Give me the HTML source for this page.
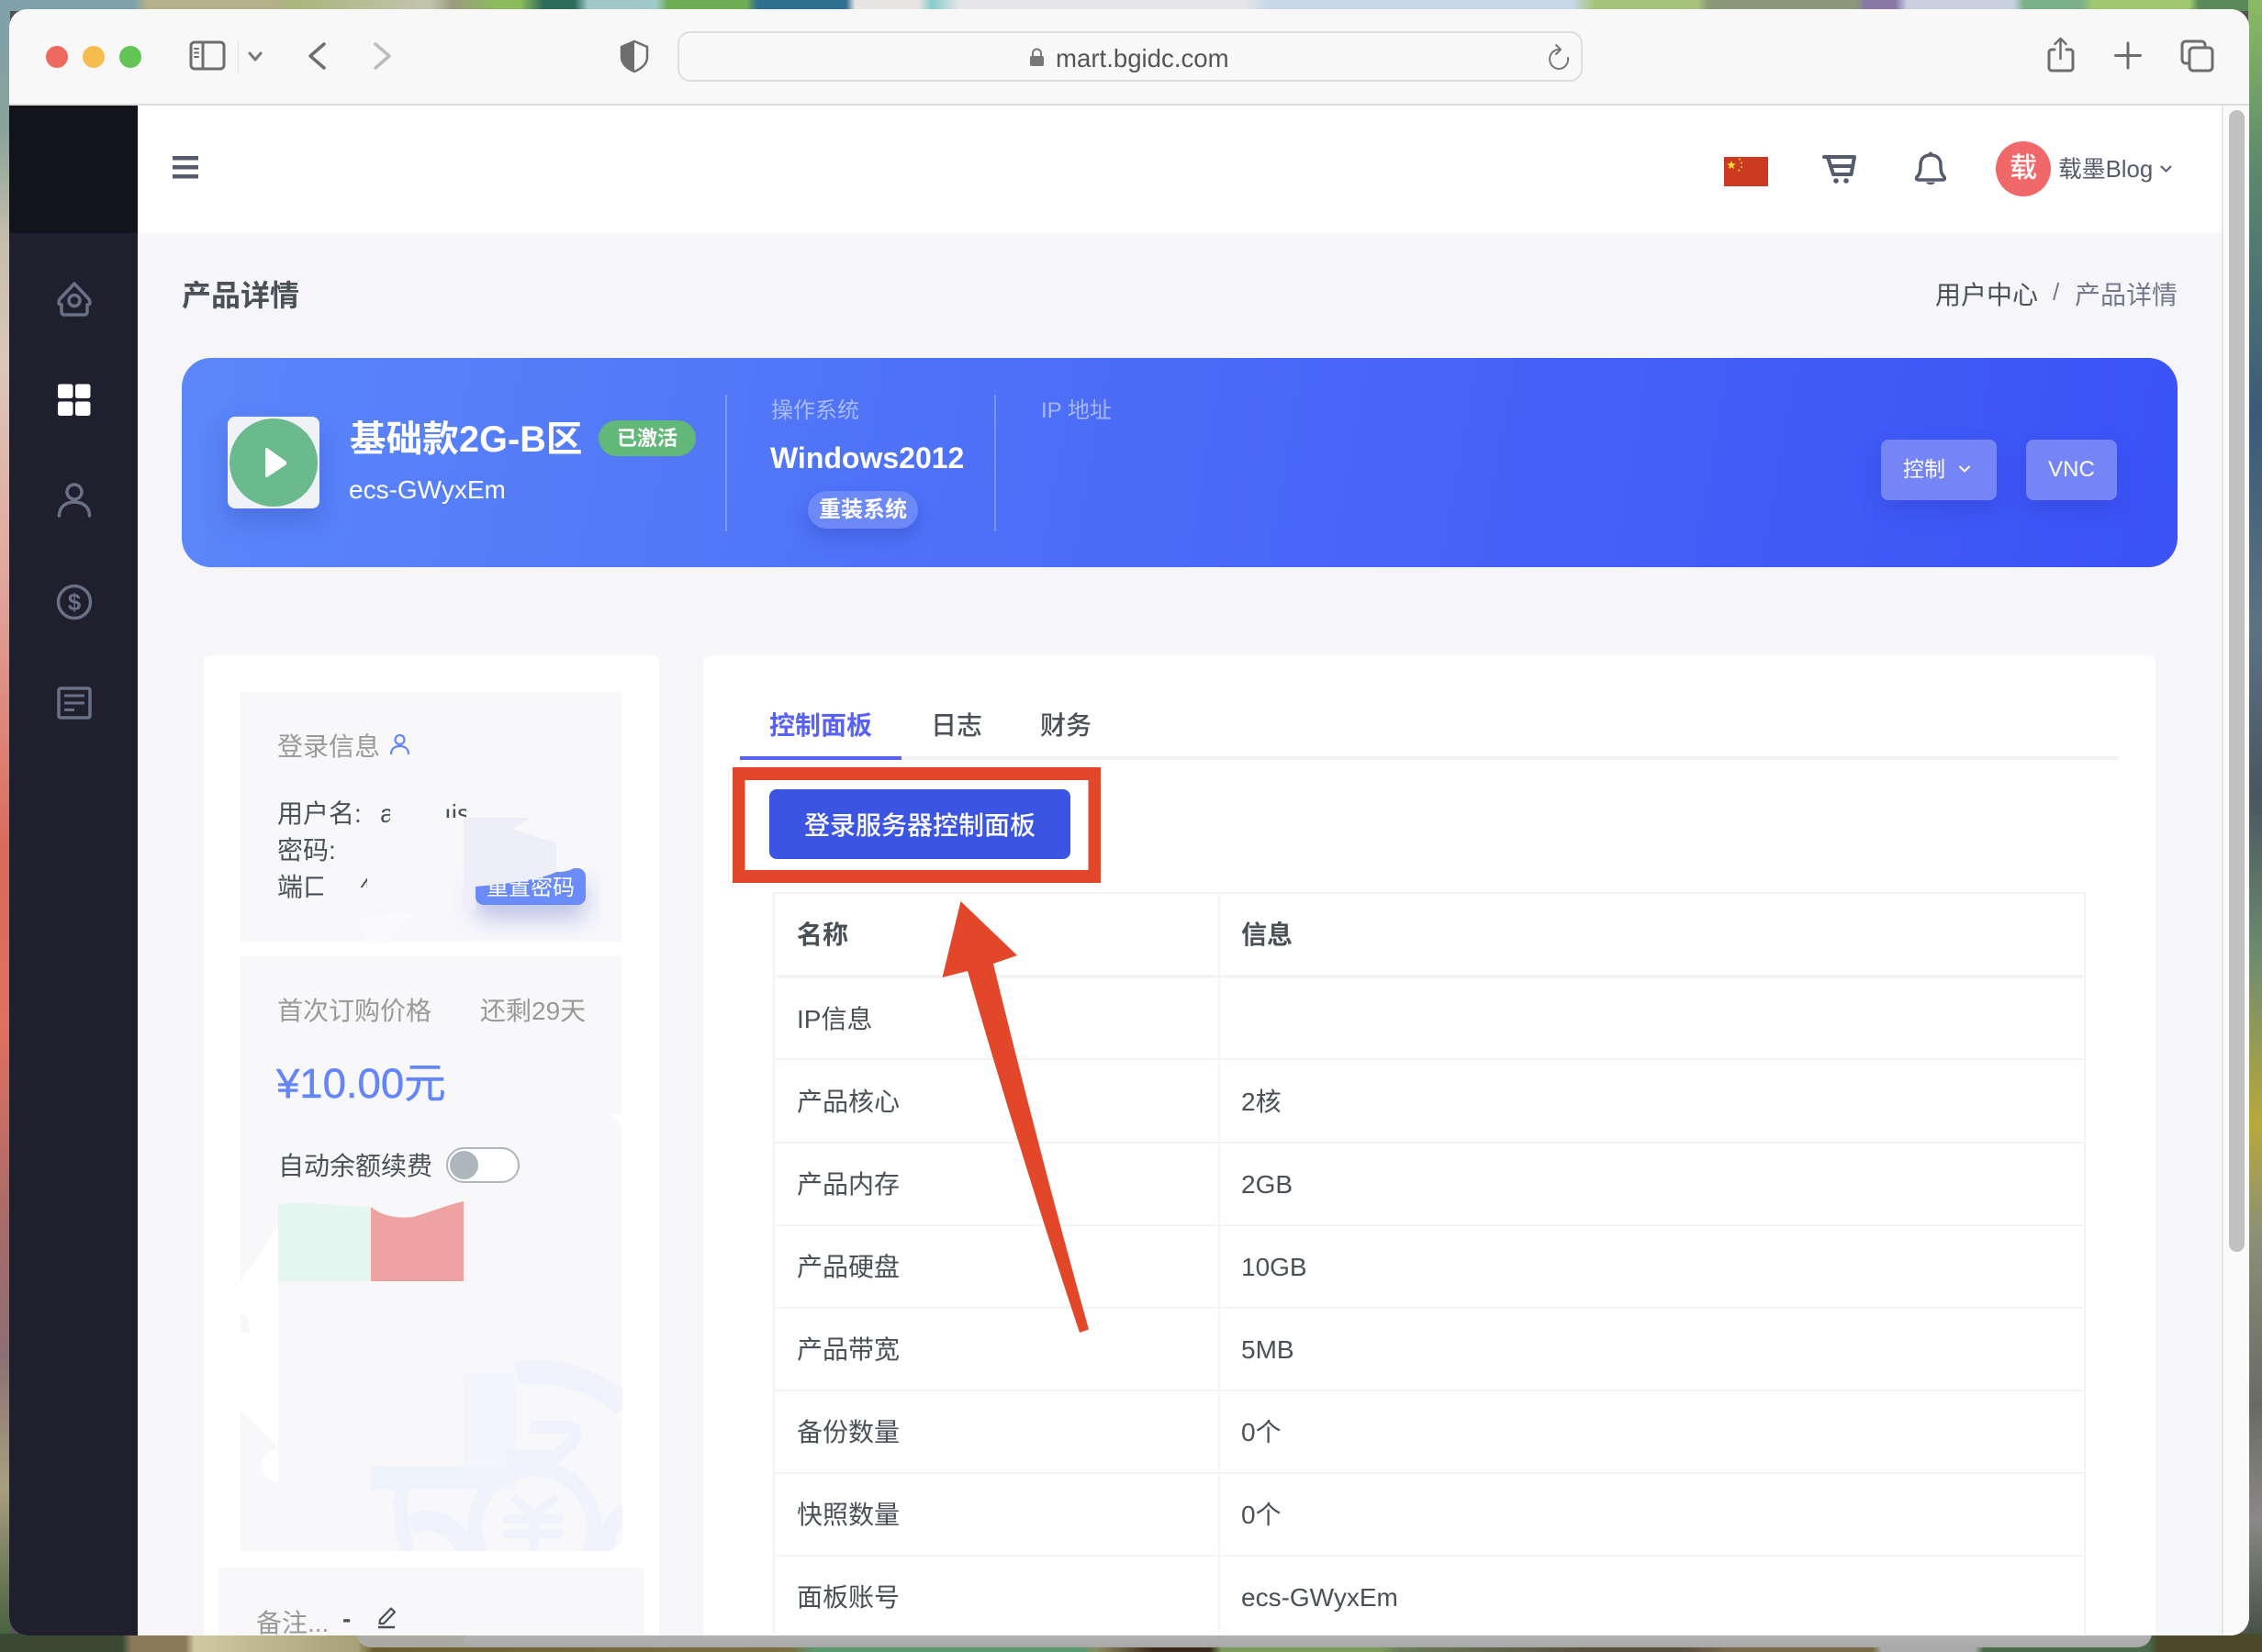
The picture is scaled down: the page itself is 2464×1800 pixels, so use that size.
<!DOCTYPE html>
<html lang="zh"><head><meta charset="utf-8"><title>产品详情</title>
<style>
html,body{margin:0;padding:0;width:2464px;height:1800px;overflow:hidden;background:#555}
body{font-family:"Liberation Sans","Noto Sans CJK SC",sans-serif;position:relative}
.a{position:absolute}
.t{position:absolute;white-space:nowrap;line-height:40px;height:40px}
#win{position:absolute;left:0;top:0;width:2464px;height:1800px;clip-path:inset(10px 14px 18px 10px round 20px);background:#f6f6fa}
.c{color:#495057;font-size:28px}
.g{color:#999;font-size:28px}
.h{background:#f4f4f7}
svg{position:absolute;left:0;top:0}
</style></head><body>
<!-- wallpaper -->
<div class="a" style="left:0;top:0;width:2464px;height:12px;background:linear-gradient(90deg,#7fa2aa 0,#7fa2aa 5.900%,#b3b08a 6.500%,#b3b08a 12%,#a8b67a 13%,#c4c4ae 19%,#9a9c80 20%,#8cbb5a 22%,#8cbb5a 23%,#2f6d5a 24%,#2f6d5a 25.400%,#a0c8c8 26%,#a0c8c8 29%,#6fae55 29.500%,#6fae55 33%,#2f6f90 33.500%,#2f6f90 37.400%,#e8e4e4 37.800%,#e8e4e4 40.600%,#8cc 41.200%,#e6e6e8 42.400%,#e6e6e8 55%,#c8d8e8 56%,#c8d8e8 69.500%,#a8c47a 70.500%,#a8c47a 75%,#8a9a78 75.500%,#8a9a78 82%,#8878a8 82.500%,#8878a8 83.800%,#c8d0e0 84.300%,#c8d0e0 89%,#7ab088 89.500%,#7ab088 92%,#a0c870 92.500%,#a0c870 96.800%,#5a8a5a 97.200%,#5a8a5a 100%)"></div>
<div class="a" style="left:0;top:0;width:11px;height:1800px;background:linear-gradient(180deg,#7fa2aa 0,#8aa39a 8%,#c2bcab 14%,#dcc6bb 22%,#e3a69c 35%,#d9695a 52%,#e0705f 62%,#a56a6a 75%,#8c6f74 82%,#a89f7e 90%,#3f5a3a 100%)"></div>
<div class="a" style="left:2449px;top:0;width:15px;height:1800px;background:linear-gradient(180deg,#8bbb62 0,#5d8a6c 10%,#3a5a78 25%,#5d7380 38%,#4a5660 48%,#6f8c6e 58%,#b8a83c 68%,#8a8f78 75%,#6a6a64 85%,#8a8888 92%,#3b4a3c 100%)"></div>
<div class="a" style="left:0;top:1780px;width:2464px;height:20px;background:linear-gradient(90deg,#3a4a32 0,#3a4a32 5.400%,#8a7a5a 5.800%,#8a7a5a 8.200%,#d0c8a0 8.600%,#a8a078 15.800%,#6a6030 16.500%,#7a7040 35%,#5a9a70 36%,#5a9a70 47.800%,#8a8a60 48.500%,#3a2a1a 51%,#3a2a1a 53.500%,#7a9a5a 54%,#7a9a5a 61%,#6a7a58 62%,#5a5040 70%,#5a5040 74.500%,#7a6a4a 76.500%,#7a6a4a 82.800%,#aaa 83.200%,#aaa 87.300%,#4a6a4a 87.700%,#4a6a4a 95%,#4a4a2a 95.400%,#4a4a2a 100%)"></div>
<div class="a" style="left:388px;top:1776px;width:1956px;height:19px;border-radius:0 0 16px 16px;background:linear-gradient(180deg,#9c9c9c 0,#b2b2b2 40%,#a8a8a8 100%)"></div>
<div class="a" style="left:388px;top:1776px;width:118px;height:19px;border-radius:0 0 0 16px;background:#aba9a3"></div>

<div id="win">
  <!-- chrome -->
  <div class="a" style="left:0;top:0;width:2464px;height:113px;background:#f8f8f8;border-bottom:2px solid #dcdcdc"></div>
  <div class="a" style="left:738px;top:34px;width:982px;height:51px;border:2px solid #dedede;border-radius:14px;background:#f9f9f9"></div>
  <div class="t" style="left:1150px;top:44px;font-size:27.600px;color:#555">mart.bgidc.com</div>

  <!-- sidebar -->
  <div class="a" style="left:10px;top:115px;width:140px;height:139px;background:#13131c"></div>
  <div class="a" style="left:10px;top:254px;width:140px;height:1540px;background:#1f1f2e"></div>

  <!-- header -->
  <div class="a" style="left:150px;top:115px;width:2271px;height:139px;background:#fff"></div>
  <div class="a" style="left:2174px;top:154px;width:60px;height:60px;border-radius:50%;background:#f1686a;color:#fff;font-size:30px;line-height:60px;text-align:center;font-weight:500">载</div>
  <div class="t" style="left:2242px;top:165px;font-size:25.800px;color:#555b6d">载墨Blog</div>

  <!-- scroll track -->
  <div class="a" style="left:2420px;top:115px;width:2px;height:1680px;background:#e6e6e6"></div>
  <div class="a" style="left:2422px;top:115px;width:30px;height:1680px;background:#fafafa"></div>
  <div class="a" style="left:2428px;top:120px;width:17px;height:1244px;border-radius:9px;background:#c1c1c1"></div>

  <!-- title row -->
  <div class="t" style="left:198px;top:302px;font-size:32px;font-weight:700;color:#495057">产品详情</div>
  <div class="t" style="left:2108px;top:302px;font-size:28px;color:#495057">用户中心</div>
  <div class="t" style="left:2236px;top:298px;font-size:26px;color:#74788d">/</div>
  <div class="t" style="left:2260px;top:302px;font-size:28px;color:#74788d">产品详情</div>

  <!-- banner -->
  <div class="a" style="left:198px;top:390px;width:2174px;height:228px;border-radius:32px;background:linear-gradient(100deg,#5b87f9 0,#4a6af8 50%,#3a52f6 100%)"></div>
  <div class="a" style="left:248px;top:454px;width:100px;height:100px;border-radius:8px;background:#eff2f7;box-shadow:0 14px 28px rgba(40,60,170,.28)"></div>
  <div class="a" style="left:250px;top:456px;width:96px;height:96px;border-radius:50%;background:#6aba8e"></div>
  <div class="t" style="left:381px;top:459px;font-size:39.500px;font-weight:700;color:#fff;letter-spacing:.15px">基础款2G-B区</div>
  <div class="a" style="left:652px;top:458px;width:106px;height:39px;border-radius:20px;background:#62b879;color:#fff;font-size:22px;font-weight:700;line-height:39px;text-align:center">已激活</div>
  <div class="t" style="left:380px;top:514px;font-size:28px;color:#fff">ecs-GWyxEm</div>
  <div class="a" style="left:790px;top:430px;width:2px;height:149px;background:rgba(255,255,255,.25)"></div>
  <div class="a" style="left:1083px;top:430px;width:2px;height:149px;background:rgba(255,255,255,.25)"></div>
  <div class="t" style="left:840px;top:428px;font-size:24px;color:rgba(255,255,255,.5)">操作系统</div>
  <div class="t" style="left:1134px;top:428px;font-size:24px;color:rgba(255,255,255,.5)">IP 地址</div>
  <div class="t" style="left:839px;top:479px;font-size:32px;font-weight:700;color:#fff">Windows2012</div>
  <div class="a" style="left:880px;top:535px;width:120px;height:41px;border-radius:21px;background:#6d89f8;color:#fff;font-size:24px;font-weight:700;line-height:41px;text-align:center;box-shadow:0 10px 20px rgba(40,60,170,.3)">重装系统</div>
  <div class="a" style="left:2049px;top:479px;width:126px;height:66px;border-radius:8px;background:#7585f6;box-shadow:0 10px 22px rgba(40,50,170,.25)"></div>
  <div class="t" style="left:2073px;top:491px;font-size:23px;color:#fff">控制</div>
  <div class="a" style="left:2207px;top:479px;width:99px;height:66px;border-radius:8px;background:#7585f6;box-shadow:0 10px 22px rgba(40,50,170,.25);color:#fff;font-size:24px;line-height:66px;text-align:center">VNC</div>

  <!-- left card -->
  <div class="a" style="left:222px;top:714px;width:496px;height:1090px;border-radius:8px 8px 0 0;background:#fff"></div>
  <div class="a" style="left:262px;top:754px;width:416px;height:272px;background:#f8f8fb"></div>
  <div class="t g" style="left:302px;top:794px">登录信息</div>
  <div class="t c" style="left:302px;top:867px">用户名:</div>
  <div class="a c" style="left:414px;top:867px;width:11px;height:40px;overflow:hidden;line-height:40px">a</div>
  <div class="a c" style="left:484px;top:867px;width:24px;height:24px;overflow:hidden;line-height:40px">ıis</div>
  <div class="t c" style="left:302px;top:907px">密码:</div>
  <div class="a c" style="left:302px;top:947px;width:50px;height:40px;overflow:hidden;line-height:40px;white-space:nowrap">端口</div>
  <div class="a c" style="left:390px;top:947px;width:10px;height:20px;overflow:hidden;line-height:40px">4</div>
  <div class="a" style="left:518px;top:946px;width:120px;height:40px;border-radius:9px;background:#6a8bf8;color:#fff;font-size:24px;line-height:43px;text-align:center;box-shadow:0 14px 26px rgba(70,90,190,.35)">重置密码</div>

  <div class="a" style="left:262px;top:1042px;width:416px;height:648px;background:#f8f8fb;border-radius:0 0 18px 0"></div>
  <div class="t g" style="left:302px;top:1082px">首次订购价格</div>
  <div class="t g" style="left:523px;top:1082px">还剩29天</div>
  <div class="t" style="left:301px;top:1159px;font-size:45.500px;color:#6586f8;line-height:44px;height:44px;-webkit-text-stroke:.5px #6586f8">¥10.00元</div>
  <div class="t" style="left:303px;top:1251px;font-size:28px;color:#495057">自动余额续费</div>
  <div class="a" style="left:486px;top:1250px;width:76px;height:35px;border:2px solid #adb5bd;border-radius:20px;background:#fff"></div>
  <div class="a" style="left:490px;top:1254px;width:31px;height:31px;border-radius:50%;background:#adb5bd"></div>

  <div class="a" style="left:238px;top:1708px;width:464px;height:90px;background:#f8f8fb"></div>
  <div class="t g" style="left:279px;top:1749px">备注...</div>
  <div class="t c" style="left:373px;top:1744px;font-weight:700">-</div>

  <!-- right card -->
  <div class="a" style="left:766px;top:714px;width:1582px;height:1090px;border-radius:8px 8px 0 0;background:#fff"></div>
  <div class="t" style="left:838px;top:771px;font-size:28px;font-weight:700;color:#5a62f6">控制面板</div>
  <div class="t" style="left:1014px;top:771px;font-size:28px;font-weight:500;color:#495057">日志</div>
  <div class="t" style="left:1133px;top:771px;font-size:28px;font-weight:500;color:#495057">财务</div>
  <div class="a" style="left:806px;top:824px;width:1502px;height:4px;background:#f3f3f6"></div>
  <div class="a" style="left:806px;top:824px;width:176px;height:4px;background:#5a62f6"></div>
  <div class="a" style="left:838px;top:860px;width:328px;height:76px;border-radius:8px;background:#3b55e2;color:#fff;font-size:28px;line-height:80px;text-align:center;font-weight:500">登录服务器控制面板</div>

  <!-- table -->
  <div class="a h" style="left:843px;top:972px;width:1429px;height:2px"></div>
  <div class="a h" style="left:843px;top:1062px;width:1429px;height:4px"></div>
  <div class="a h" style="left:843px;top:1153px;width:1429px;height:2px"></div>
  <div class="a h" style="left:843px;top:1244px;width:1429px;height:2px"></div>
  <div class="a h" style="left:843px;top:1334px;width:1429px;height:2px"></div>
  <div class="a h" style="left:843px;top:1424px;width:1429px;height:2px"></div>
  <div class="a h" style="left:843px;top:1514px;width:1429px;height:2px"></div>
  <div class="a h" style="left:843px;top:1604px;width:1429px;height:2px"></div>
  <div class="a h" style="left:843px;top:1694px;width:1429px;height:2px"></div>
  <div class="a h" style="left:842px;top:972px;width:2px;height:820px"></div>
  <div class="a h" style="left:1327px;top:972px;width:2px;height:820px"></div>
  <div class="a h" style="left:2270px;top:972px;width:2px;height:820px"></div>
  <div class="t c" style="left:868px;top:999px;font-weight:700">名称</div>
  <div class="t c" style="left:1352px;top:999px;font-weight:700">信息</div>
  <div class="t c" style="left:868px;top:1091px">IP信息</div>
  <div class="t c" style="left:868px;top:1181px">产品核心</div><div class="t c" style="left:1352px;top:1181px">2核</div>
  <div class="t c" style="left:868px;top:1271px">产品内存</div><div class="t c" style="left:1352px;top:1271px">2GB</div>
  <div class="t c" style="left:868px;top:1361px">产品硬盘</div><div class="t c" style="left:1352px;top:1361px">10GB</div>
  <div class="t c" style="left:868px;top:1451px">产品带宽</div><div class="t c" style="left:1352px;top:1451px">5MB</div>
  <div class="t c" style="left:868px;top:1541px">备份数量</div><div class="t c" style="left:1352px;top:1541px">0个</div>
  <div class="t c" style="left:868px;top:1631px">快照数量</div><div class="t c" style="left:1352px;top:1631px">0个</div>
  <div class="t c" style="left:868px;top:1721px">面板账号</div><div class="t c" style="left:1352px;top:1721px">ecs-GWyxEm</div>

  <!-- overlay graphics -->
  <svg width="2464" height="1800" viewBox="0 0 2464 1800">
    <defs><clipPath id="wm"><path d="M262 1042H678V1672A18 18 0 0 1 660 1690H262Z"/></clipPath></defs>
    <!-- traffic lights -->
    <circle cx="62" cy="62" r="12" fill="#ee6a5f"/><circle cx="102" cy="62" r="12" fill="#f5bd4f"/><circle cx="142" cy="62" r="12" fill="#61c454"/>
    <!-- toolbar left -->
    <g fill="none" stroke="#6e6e6e" stroke-width="3" stroke-linecap="round" stroke-linejoin="round">
      <rect x="208" y="46" width="36" height="29" rx="4"/><path d="M221 46V75"/>
      <path d="M212 53h4M212 57.500h4M212 62h4" stroke-width="2"/>
      <path d="M259.500 45V80" stroke="#e4e4e4" stroke-width="1.500"/>
      <path d="M272 58l6 7 6-7" stroke="#777"/>
      <path d="M353 48L338 61 353 74" stroke-width="3.500"/>
      <path d="M409 48L424 61 409 74" stroke="#bcbcbc" stroke-width="3.500"/>
    </g>
    <path d="M691 45L705 51V62C705 70 698 75 691 78 684 75 677 70 677 62V51Z" fill="#f8f8f8" stroke="#6e6e6e" stroke-width="2.500" stroke-linejoin="round"/>
    <path d="M691 45V78C684 75 677 70 677 62V51Z" fill="#6e6e6e"/>
    <rect x="1122" y="61" width="15" height="11" rx="2" fill="#777"/><path d="M1125 61v-3a4.500 4.500 0 0 1 9 0v3" fill="none" stroke="#777" stroke-width="2"/>
    <g fill="none" stroke="#777" stroke-width="2" stroke-linecap="round" stroke-linejoin="round">
      <path d="M1699 54A10 10.500 0 1 0 1708 63"/><path d="M1695 49l5 5-5 5"/>
    </g>
    <g fill="none" stroke="#6e6e6e" stroke-width="3" stroke-linecap="round" stroke-linejoin="round">
      <path d="M2238 54H2235a3 3 0 0 0-3 3V74a3 3 0 0 0 3 3H2255a3 3 0 0 0 3-3V57a3 3 0 0 0-3-3H2251"/>
      <path d="M2244.500 64V42M2238.500 48l6-6 6 6" stroke-width="2.500"/>
      <path d="M2318 47V74M2304.500 60.500H2331.500"/>
      <path d="M2383 69H2381a4 4 0 0 1-4-4V49a4 4 0 0 1 4-4H2398a4 4 0 0 1 4 4v3"/>
      <rect x="2385" y="52" width="25" height="25" rx="4"/>
    </g>
    <!-- hamburger -->
    <g fill="#555b6d"><rect x="188" y="170" width="28" height="4.500"/><rect x="188" y="180" width="28" height="4.500"/><rect x="188" y="190" width="28" height="4.500"/></g>
    <!-- flag -->
    <rect x="1878" y="171" width="48" height="32" fill="#cb3a20"/>
    <path d="M1886 175l1.300 3.300 3.500.2-2.700 2.200.9 3.400-3-1.900-3 1.900.9-3.400-2.700-2.200 3.500-.2z" fill="#fbd82c"/>
    <g fill="#f6d13b"><circle cx="1895" cy="173.500" r="1"/><circle cx="1897" cy="177.500" r="1"/><circle cx="1897" cy="182" r="1"/><circle cx="1894.500" cy="185.500" r="1"/></g>
    <!-- cart -->
    <g fill="none" stroke="#555b6d" stroke-width="4" stroke-linejoin="round" stroke-linecap="round">
      <path d="M1987 171H2020L2016.500 190H1997L1991 171"/><path d="M1994 181H2018"/>
    </g>
    <circle cx="2000" cy="197" r="2.800" fill="#555b6d"/><circle cx="2011" cy="197" r="2.800" fill="#555b6d"/>
    <!-- bell -->
    <path d="M2088 193C2091 190 2092 187 2092 180 2092 172 2097 169 2103 169 2109 169 2114 172 2114 180 2114 187 2115 190 2118 193 2119 195 2118 196 2116 196H2090C2088 196 2087 195 2088 193Z" fill="none" stroke="#555b6d" stroke-width="3.500" stroke-linejoin="round"/>
    <path d="M2098 198.500h10c-1 3.500-9 3.500-10 0Z" fill="#555b6d"/><circle cx="2103" cy="167.500" r="2" fill="#555b6d"/>
    <path d="M2354 181l5.500 5.500 5.500-5.500" fill="none" stroke="#555b6d" stroke-width="2"/>
    <!-- sidebar icons -->
    <g fill="none" stroke="#6a7187" stroke-width="3.500" stroke-linejoin="round" stroke-linecap="round">
      <path d="M81 309L66 325Q64 327 64 330 64 332 67 332V340a3 3 0 0 0 3 3H92a3 3 0 0 0 3-3V332C98 332 98 330 98 330 98 327 96 325 96 325Z"/><circle cx="81" cy="327.500" r="6"/>
      <circle cx="81" cy="536" r="8"/><path d="M64.500 562C64.500 552 72 547 81 547 90 547 97.500 552 97.500 562"/>
      <circle cx="81" cy="656" r="17.500"/>
      <rect x="64" y="750" width="34" height="32" rx="2"/>
      <path d="M70 758H92M70 766H92M70 773.500H81" stroke-width="3" stroke-linecap="butt"/>
    </g>
    <text x="81" y="665" font-family="Liberation Sans" font-weight="700" font-size="26" fill="#6a7187" text-anchor="middle">$</text>
    <g fill="#fff"><rect x="63" y="418.500" width="16.500" height="15.500" rx="2.500"/><rect x="82" y="418.500" width="16.500" height="15.500" rx="2.500"/><rect x="63" y="437.500" width="16.500" height="15.500" rx="2.500"/><rect x="82" y="437.500" width="16.500" height="15.500" rx="2.500"/></g>
    <!-- play -->
    <path d="M291 488L312 503 312 506 291 520Q289 521 289 518V490Q289 487 291 488Z" fill="#fff"/>
    <!-- banner chevron -->
    <path d="M2134.500 508l5.500 5.500 5.500-5.500" fill="none" stroke="#fff" stroke-width="2"/>
    <!-- login user icon -->
    <g fill="none" stroke="#6586f8" stroke-width="2.200"><circle cx="435.500" cy="806" r="5"/><path d="M426 822C426 815 431 813 435.500 813 440 813 445 815 445 822"/></g>
    <!-- smudges -->
    <path d="M505 891H578L558 903 606 918V950C590 958 560 962 518 966V992H505Z" fill="#eeeef8"/>
    <path d="M505 890H600L640 900V946L625 946C618 950 611 950 606 950V918L558 903 578 891Z" fill="#f8f8fb"/>
    <path d="M392 1000L440 993 452 996 420 1028 400 1028Z" fill="#fafafc"/>
    <path d="M660 1214H678V1232C676 1222 670 1216 660 1214Z" fill="#fff"/>
    <!-- colour blocks -->
    <path d="M303 1312C330 1309 370 1314 404 1315V1396H303Z" fill="#e5f6f0"/>
    <path d="M404 1315C420 1328 440 1327 450 1326 470 1320 490 1312 505 1309V1396H404Z" fill="#eea3a2"/>
    <path d="M303 1334L280 1372 266 1388 262 1400V1430C270 1432 272 1440 272 1452H262V1537L303 1577Z" fill="#fff"/>
    <path d="M303 1579A18 18 0 0 0 303 1615Z" fill="#fff"/>
    <!-- watermark -->
    <g clip-path="url(#wm)" fill="none" stroke="#f0f3fb">
      <rect x="505" y="1497" width="57" height="126" fill="#f4f5fb" stroke="none"/>
      <rect x="404" y="1598" width="101" height="25" fill="#eff3fb" stroke="none"/>
      <rect x="505" y="1598" width="40" height="25" fill="#f0f3fb" stroke="none"/>
      <path d="M563 1497C600 1488 650 1505 680 1531" stroke-width="26"/>
      <path d="M578 1555H615C630 1555 630 1565 620 1575L605 1587H553" stroke-width="14"/>
      <circle cx="582" cy="1665" r="65" stroke-width="17"/>
      <path d="M553 1655H610M553 1671H610" stroke-width="10" stroke-linecap="round"/>
      <path d="M558 1631L582 1651 607 1631M582 1651V1692" stroke-width="10"/>
      <path d="M437 1623C435 1650 438 1670 445 1692" stroke-width="16"/>
      <path d="M448 1662C470 1650 495 1660 510 1692" stroke-width="22"/>
      <path d="M660 1692C660 1670 668 1655 680 1648" stroke-width="18"/>
    </g>
    <!-- pencil -->
    <g fill="none" stroke="#495057" stroke-width="2.200" stroke-linejoin="round">
      <path d="M414 1765L426 1752.500 430 1756.500 418 1769H413.500Z"/><path d="M412 1773H430" stroke-width="2.500"/>
    </g>
    <!-- annotation -->
    <path fill-rule="evenodd" d="M798 836H1199V962H798ZM811.500 850V948H1185.500V850Z" fill="#e2472a"/>
    <path d="M1046.500 982L1108 1041 1082 1050Q1132 1255 1186 1448.500L1176 1452Q1112 1260 1054 1058L1026.500 1065Z" fill="#e2472a"/>
  </svg>
</div>
</body></html>
